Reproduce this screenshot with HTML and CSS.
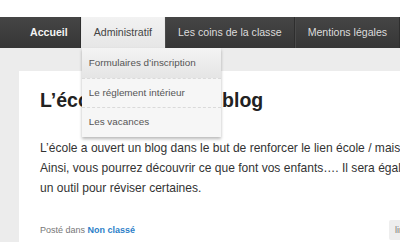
FILE: index.html
```html
<!DOCTYPE html>
<html lang="fr">
<head>
<meta charset="utf-8">
<link rel="stylesheet" href="styles.css">
</head>
<body>
<div class="top"></div>
<nav class="nav">
  <ul class="menu">
    <li class="item home">Accueil</li>
    <li class="item active">Administratif
      <ul class="dropdown">
        <li class="drop-item hover">Formulaires d’inscription</li>
        <li class="drop-item mid">Le réglement intérieur</li>
        <li class="drop-item last">Les vacances</li>
      </ul>
    </li>
    <li class="item">Les coins de la classe</li>
    <li class="item">Mentions légales</li>
  </ul>
</nav>
<main class="main">
  <article class="card">
    <div class="card-head">
      <h1 class="title">L’école a ouvert un blog</h1>
      <span class="date">MISE</span>
    </div>
    <p class="text">L’école a ouvert un blog dans le but de renforcer le lien école / maison.<br>Ainsi, vous pourrez découvrir ce que font vos enfants…. Il sera également<br>un outil pour réviser certaines.</p>
    <div class="meta">
      <span>Posté dans <a class="cat">Non classé</a></span>
      <span class="more">lire la suite</span>
    </div>
  </article>
</main>
</body>
</html>
```
FILE: styles.css
```css
html, body {
  margin: 0;
  padding: 0;
  overflow: hidden;
  width: 400px;
  height: 242px;
  background: #ececec;
  font-family: "Liberation Sans", Arial, sans-serif;
}
.top {
  height: 17px;
  background: #ffffff;
}
.nav {
  height: 31px;
  background: linear-gradient(#454545, #363636);
  width: 600px;
}
.menu {
  list-style: none;
  margin: 0;
  padding: 0 0 0 18px;
  display: flex;
  height: 31px;
}
.item {
  position: relative;
  padding: 0 12px;
  line-height: 31px;
  font-size: 10.6px;
  color: #dcdcdc;
  border-right: 1px solid #2e2e2e;
  border-left: 1px solid #4a4a4a;
  white-space: nowrap;
}
.item.home {
  font-weight: bold;
  color: #f4f4f4;
  border-left: none;
}
.item.active {
  background: linear-gradient(#f2f2f2, #e6e6e6);
  color: #444;
  border-color: #e8e8e8;
}
.dropdown {
  position: absolute;
  left: 0;
  top: 31px;
  width: 139px;
  list-style: none;
  margin: 0;
  padding: 0;
  background: #f6f6f6;
  box-shadow: 0 2px 3px rgba(0, 0, 0, 0.28);
  z-index: 5;
}
.drop-item {
  padding: 0 7px;
  font-size: 9.9px;
  color: #555;
  border-bottom: 1px dashed #dadada;
}
.drop-item.hover {
  background: linear-gradient(#f4f4f4, #e5e5e5);
  height: 30px;
  line-height: 30px;
}
.drop-item.mid {
  height: 28px;
  line-height: 28px;
}
.drop-item.last {
  border-bottom: none;
  height: 29px;
  line-height: 28px;
}
.main {
  padding: 23px 0 0 19px;
}
.card {
  background: #ffffff;
  width: 520px;
  height: 200px;
  padding: 0 0 0 21px;
  box-sizing: border-box;
}
.card-head {
  display: flex;
  align-items: flex-start;
  height: 62px;
}
.title {
  margin: 17px 0 0 0;
  font-size: 19.5px;
  font-weight: bold;
  color: #222;
  line-height: 24px;
}
.date {
  margin: 8px 0 0 auto;
  font-size: 6px;
  color: #999;
  letter-spacing: 0.5px;
  width: 128px;
}
.text {
  margin: 5px 0 0 0;
  font-size: 12.05px;
  line-height: 20px;
  color: #333;
  white-space: nowrap;
}
.meta {
  margin-top: 22px;
  display: flex;
  align-items: center;
  font-size: 9px;
  color: #777;
}
.cat {
  color: #2d7fc9;
  font-weight: bold;
}
.more {
  margin-left: 254px;
  background: #eeeeee;
  color: #777;
  padding: 5px 6px;
  border-radius: 2px;
}
```
